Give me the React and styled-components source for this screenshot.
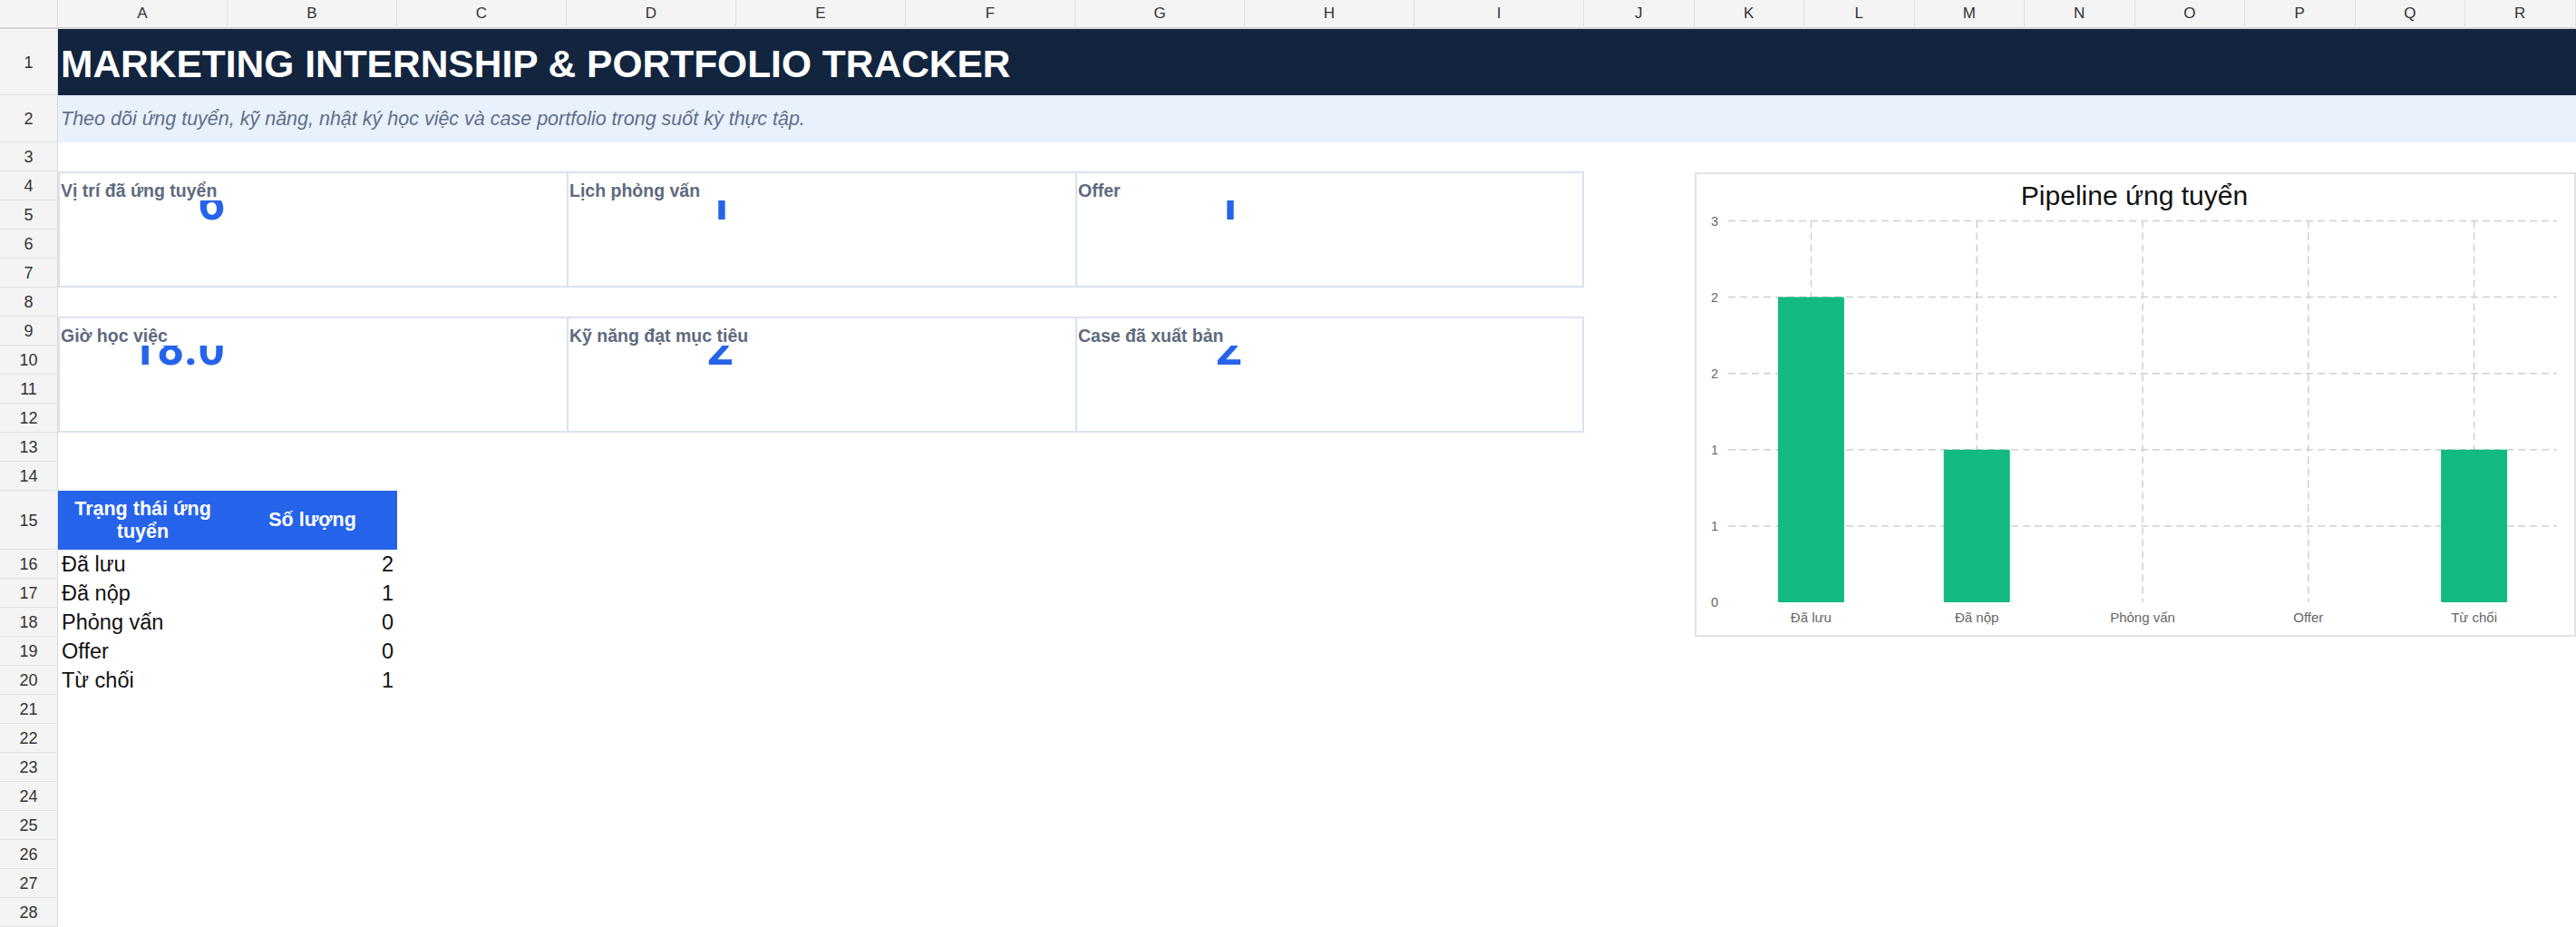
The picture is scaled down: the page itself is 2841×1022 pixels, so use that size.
import React from "react";
import styled, { createGlobalStyle } from "styled-components";

const GlobalStyle = createGlobalStyle`
  html, body {
    margin: 0;
    padding: 0;
    background: #fff;
    overflow: hidden;
  }
  body {
    font-family: "Liberation Sans", Arial, sans-serif;
  }
  * {
    box-sizing: border-box;
  }
`;

const COLS = "ABCDEFGHIJKLMNOPQR".split("");
const ROW_COUNT = 28;

const Sheet = styled.div`
  display: grid;
  grid-template-columns: 64px repeat(9, 187px) repeat(9, 121.5px);
  grid-template-rows: 32px 73px 52px 32px repeat(11, 32px) 65px repeat(13, 32px);
  width: 2841px;
  height: 1022px;
  overflow: hidden;
  font-family: "Liberation Sans", Arial, sans-serif;
`;

const Corner = styled.div`
  grid-row: 1;
  grid-column: 1;
  background: #f4f4f4;
  border-right: 1px solid #d9d9d9;
  border-bottom: 2px solid #d4d4d4;
`;

const ColHead = styled.div`
  grid-row: 1;
  grid-column: ${(p) => p.$col};
  background: #f4f4f4;
  border-right: 1px solid #e2e2e2;
  border-bottom: 2px solid #d4d4d4;
  display: flex;
  align-items: center;
  justify-content: center;
  font-size: 17px;
  color: #333;
`;

const RowHead = styled.div`
  grid-column: 1;
  grid-row: ${(p) => p.$row};
  background: #f4f4f4;
  border-right: 1px solid #d9d9d9;
  border-bottom: 1px solid #e2e2e2;
  display: flex;
  align-items: center;
  justify-content: center;
  padding-top: 2px;
  font-size: 18px;
  color: #333;
`;

const TitleBar = styled.div`
  grid-row: 2;
  grid-column: 2 / -1;
  background: #12243e;
  color: #fff;
  display: flex;
  align-items: center;
  padding: 5px 0 0 3px;
  font-size: 42.5px;
  font-weight: 700;
  white-space: nowrap;
`;

const SubtitleBar = styled.div`
  grid-row: 3;
  grid-column: 2 / -1;
  background: #e9f1fd;
  color: #5f6f88;
  display: flex;
  align-items: center;
  padding-left: 3px;
  font-size: 21.5px;
  font-style: italic;
  white-space: nowrap;
`;

const Card = styled.div`
  grid-column: ${(p) => p.$col} / span 3;
  grid-row: ${(p) => p.$row} / span 4;
  border: 2px solid #d9e2ee;
  border-right: ${(p) => (p.$last ? "2px solid #d9e2ee" : "none")};
  display: grid;
  grid-template-columns: 185px 1fr;
  grid-template-rows: 30px 32px 1fr;
`;

const CardLabel = styled.div`
  grid-column: 1 / -1;
  grid-row: 1;
  display: flex;
  align-items: flex-end;
  padding-left: 1px;
  font-size: 19.5px;
  line-height: 22px;
  font-weight: 700;
  color: #5e6a7e;
  white-space: nowrap;
`;

/* the big number sits in a single 32px cell: only its lower part shows */
const CardValue = styled.div`
  grid-column: 1;
  grid-row: 2;
  height: 32px;
  overflow: hidden;
`;

const ValueText = styled.div`
  margin-top: -25.8px;
  padding-right: 3px;
  text-align: right;
  font-family: Roboto, "Liberation Sans", Arial, sans-serif;
  font-size: 52px;
  line-height: 60px;
  font-weight: 700;
  color: #2563eb;
  white-space: nowrap;
`;

const TableHead = styled.div`
  grid-row: 16;
  grid-column: ${(p) => p.$col};
  background: #2563eb;
  color: #fff;
  display: flex;
  align-items: center;
  justify-content: center;
  text-align: center;
  padding: 0 6px;
  font-size: 21.5px;
  font-weight: 700;
  line-height: 25px;
`;

const TableCell = styled.div`
  grid-row: ${(p) => p.$row};
  grid-column: ${(p) => p.$col};
  display: flex;
  align-items: flex-end;
  justify-content: ${(p) => (p.$align === "right" ? "flex-end" : "flex-start")};
  padding: 0 4px 2px 4px;
  font-size: 23.5px;
  line-height: 27px;
  color: #111;
  white-space: nowrap;
`;

const ChartBox = styled.div`
  grid-column: 12 / 20;
  grid-row: 5 / 20;
  align-self: start;
  margin-top: 1px;
  height: 512px;
  border: 2px solid #e2e2e2;
  background: #fff;
  overflow: hidden;
`;

const ChartSvg = styled.svg`
  display: block;
  font-family: "Liberation Sans", Arial, sans-serif;
`;

const cards = [
  { col: 2, row: 5, label: "Vị trí đã ứng tuyển", value: "6" },
  { col: 5, row: 5, label: "Lịch phỏng vấn", value: "1" },
  { col: 8, row: 5, label: "Offer", value: "1", last: true },
  { col: 2, row: 10, label: "Giờ học việc", value: "18.0" },
  { col: 5, row: 10, label: "Kỹ năng đạt mục tiêu", value: "2" },
  { col: 8, row: 10, label: "Case đã xuất bản", value: "2", last: true },
];

const pipeline = [
  { name: "Đã lưu", count: 2 },
  { name: "Đã nộp", count: 1 },
  { name: "Phỏng vấn", count: 0 },
  { name: "Offer", count: 0 },
  { name: "Từ chối", count: 1 },
];

const PipelineChart = () => {
  const w = 966;
  const h = 508;
  const plot = { left: 35, right: 949, top: 51.5, bottom: 472 };
  const max = 2.5;
  const ticks = [0, 0.5, 1, 1.5, 2, 2.5];
  const band = (plot.right - plot.left) / pipeline.length;
  const barW = 73;
  const yOf = (v) => plot.bottom - (v / max) * (plot.bottom - plot.top);

  return (
    <ChartSvg width={w} height={h} viewBox={`0 0 ${w} ${h}`}>
      <text x={483} y={34} textAnchor="middle" fontSize="30" fill="#111">
        Pipeline ứng tuyển
      </text>
      {ticks.map((t) => (
        <g key={t}>
          {t > 0 && (
            <line
              x1={plot.left}
              x2={plot.right}
              y1={yOf(t)}
              y2={yOf(t)}
              stroke="#cfcfcf"
              strokeWidth="1.5"
              strokeDasharray="8 5"
            />
          )}
          <text x={20} y={yOf(t) + 5} textAnchor="middle" fontSize="14.5" fill="#666">
            {Math.round(t)}
          </text>
        </g>
      ))}
      {pipeline.map((d, i) => {
        const cx = plot.left + band * (i + 0.5);
        return (
          <g key={d.name}>
            <line
              x1={cx}
              x2={cx}
              y1={plot.top}
              y2={plot.bottom}
              stroke="#cfcfcf"
              strokeWidth="1.5"
              strokeDasharray="8 5"
            />
            {d.count > 0 && (
              <rect
                x={cx - barW / 2}
                y={yOf(d.count)}
                width={barW}
                height={plot.bottom - yOf(d.count)}
                rx="1"
                fill="#12b981"
              />
            )}
            <text x={cx} y={494} textAnchor="middle" fontSize="15" fill="#666">
              {d.name}
            </text>
          </g>
        );
      })}
    </ChartSvg>
  );
};

const App = () => {
  const rows = Array.from({ length: ROW_COUNT }, (_, i) => i + 1);
  return (
    <>
      <GlobalStyle />
      <Sheet>
        <Corner />
        {COLS.map((c, i) => (
          <ColHead key={c} $col={i + 2}>
            {c}
          </ColHead>
        ))}
        {rows.map((r) => (
          <RowHead key={r} $row={r + 1}>
            {r}
          </RowHead>
        ))}

        <TitleBar>MARKETING INTERNSHIP &amp; PORTFOLIO TRACKER</TitleBar>
        <SubtitleBar>
          Theo dõi ứng tuyển, kỹ năng, nhật ký học việc và case portfolio trong suốt kỳ thực tập.
        </SubtitleBar>

        {cards.map((c) => (
          <Card key={c.label} $col={c.col} $row={c.row} $last={c.last}>
            <CardLabel>{c.label}</CardLabel>
            <CardValue>
              <ValueText>{c.value}</ValueText>
            </CardValue>
          </Card>
        ))}

        <TableHead $col={2}>Trạng thái ứng tuyển</TableHead>
        <TableHead $col={3}>Số lượng</TableHead>
        {pipeline.map((d, i) => (
          <React.Fragment key={d.name}>
            <TableCell $row={17 + i} $col={2}>
              {d.name}
            </TableCell>
            <TableCell $row={17 + i} $col={3} $align="right">
              {d.count}
            </TableCell>
          </React.Fragment>
        ))}

        <ChartBox>
          <PipelineChart />
        </ChartBox>
      </Sheet>
    </>
  );
};

export default App;
